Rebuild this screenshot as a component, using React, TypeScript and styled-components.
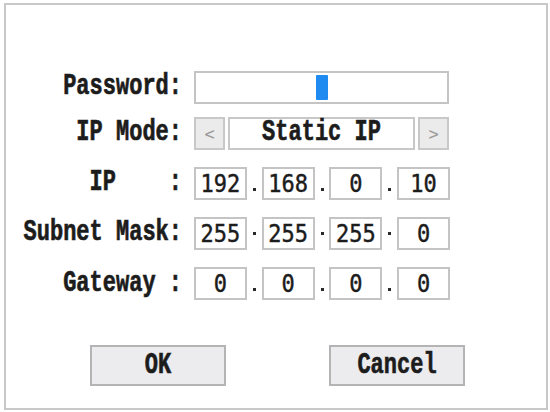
import React from 'react';
import styled, { createGlobalStyle } from 'styled-components';

const GlobalStyle = createGlobalStyle`
  html, body {
    margin: 0;
    padding: 0;
    background: #ffffff;
  }
  body {
    width: 550px;
    height: 412px;
    overflow: hidden;
    font-family: "DejaVu Sans Mono", "Liberation Mono", monospace;
    color: #1c1c1c;
  }
`;

const Panel = styled.div`
  box-sizing: border-box;
  width: 544px;
  height: 407px;
  margin: 3px 0 0 4px;
  border: 2px solid #c8c8c8;
  padding: 66px 0 0 0;
  display: flex;
  flex-direction: column;
`;

const Row = styled.div<{ $top: number }>`
  display: flex;
  align-items: center;
  gap: 12px;
  height: 33px;
  margin-top: ${(p) => p.$top}px;
`;

// tall slab-serif caption text used for labels and buttons
const Caption = styled.span`
  display: inline-block;
  font-family: "Liberation Mono", "DejaVu Sans Mono", monospace;
  font-size: 22px;
  font-weight: bold;
  line-height: 22px;
  white-space: pre;
  transform: scaleY(1.3);
  -webkit-text-stroke: 0.5px #1c1c1c;
`;

const Label = styled.div`
  width: 176px;
  text-align: right;
  line-height: 33px;
`;

const Field = styled.div`
  box-sizing: border-box;
  width: 255px;
  height: 33px;
  border: 2px solid #c4c4c4;
  background: #ffffff;
  display: flex;
  align-items: center;
  justify-content: center;
`;

const Cursor = styled.div`
  width: 12px;
  height: 25px;
  background: #1f8af0;
  border-radius: 1px;
`;

const Spinner = styled.div`
  width: 255px;
  height: 33px;
  display: flex;
  gap: 3px;
`;

const ArrowButton = styled.div`
  box-sizing: border-box;
  width: 31px;
  height: 33px;
  border: 2px solid #c8c8c8;
  background: #ebebeb;
  color: #9a9a9a;
  font-size: 17px;
  display: flex;
  align-items: center;
  justify-content: center;
`;

const SpinnerValue = styled.div`
  box-sizing: border-box;
  flex: 1;
  height: 33px;
  border: 2px solid #c8c8c8;
  background: #ffffff;
  display: flex;
  align-items: center;
  justify-content: center;
`;

const Octets = styled.div`
  width: 256px;
  height: 33px;
  display: flex;
  align-items: stretch;
`;

const Octet = styled.div`
  box-sizing: border-box;
  width: 53px;
  height: 33px;
  border: 2px solid #c4c4c4;
  background: #ffffff;
  font-size: 22px;
  display: flex;
  align-items: center;
  justify-content: center;
  -webkit-text-stroke: 0.4px #1c1c1c;

  span {
    display: inline-block;
    transform: scaleY(1.1);
  }
`;

const Dot = styled.div<{ $mid?: boolean }>`
  width: 15px;
  display: flex;
  justify-content: center;
  align-items: ${(p) => (p.$mid ? 'center' : 'flex-end')};
  padding-bottom: ${(p) => (p.$mid ? 0 : 9)}px;
  box-sizing: border-box;

  &::before {
    content: '';
    width: 3px;
    height: 3px;
    background: #2a2a2a;
  }
`;

const Actions = styled.div`
  display: flex;
  gap: 103px;
  margin-top: 45px;
  padding-left: 84px;
`;

const Button = styled.div`
  box-sizing: border-box;
  width: 136px;
  height: 41px;
  border: 2px solid #b4b4b4;
  background: #ecebee;
  display: flex;
  align-items: center;
  justify-content: center;
`;

interface IpRowProps {
  label: string;
  octets: string[];
  top: number;
  midDots?: boolean;
}

const IpRow: React.FC<IpRowProps> = ({ label, octets, top, midDots }) => (
  <Row $top={top}>
    <Label>
      <Caption>{label}</Caption>
    </Label>
    <Octets>
      {octets.map((o, i) => (
        <React.Fragment key={i}>
          {i > 0 && <Dot $mid={midDots} />}
          <Octet>
            <span>{o}</span>
          </Octet>
        </React.Fragment>
      ))}
    </Octets>
  </Row>
);

const App: React.FC = () => {
  return (
    <>
      <GlobalStyle />
      <Panel>
        <Row $top={0}>
          <Label>
            <Caption>{'   Password:'}</Caption>
          </Label>
          <Field>
            <Cursor />
          </Field>
        </Row>
        <Row $top={13}>
          <Label>
            <Caption>{'    IP Mode:'}</Caption>
          </Label>
          <Spinner>
            <ArrowButton>&lt;</ArrowButton>
            <SpinnerValue>
              <Caption>Static IP</Caption>
            </SpinnerValue>
            <ArrowButton>&gt;</ArrowButton>
          </Spinner>
        </Row>
        <IpRow label={'     IP    :'} octets={['192', '168', '0', '10']} top={17} />
        <IpRow label={'Subnet Mask:'} octets={['255', '255', '255', '0']} top={17} midDots />
        <IpRow label={'   Gateway :'} octets={['0', '0', '0', '0']} top={17} />
        <Actions>
          <Button>
            <Caption>OK</Caption>
          </Button>
          <Button>
            <Caption>Cancel</Caption>
          </Button>
        </Actions>
      </Panel>
    </>
  );
};

export default App;
